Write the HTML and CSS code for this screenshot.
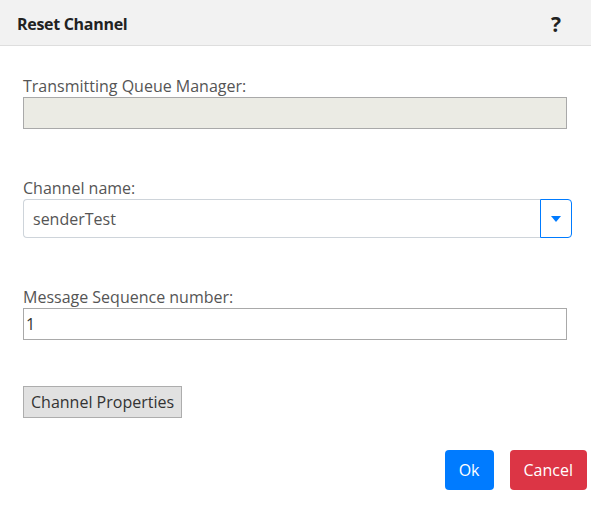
FILE: index.html
```html
<!DOCTYPE html>
<html lang="en">

<head>
    <meta charset="UTF-8">
    <meta name="viewport" content="width=device-width, initial-scale=1.0">
    <title>Reset Channel</title>
    <link rel="stylesheet" href="styles.css">
</head>

<body>
    <div class="dialog">
        <div class="header">
            <h3>Reset Channel</h3>
            <span class="help">?</span>
        </div>

        <div class="body">
            <div class="field">
                <label for="xmitq">Transmitting Queue Manager:</label>
                <input type="text" id="xmitq" class="plain" disabled>
            </div>

            <div class="field">
                <label for="channel">Channel name:</label>
                <div class="combo">
                    <input type="text" id="channel" value="senderTest">
                    <button type="button" class="drop">
                        <svg width="10" height="6" viewBox="0 0 10 6"><path d="M0 0h10L5 6z" fill="#007bff"/></svg>
                    </button>
                </div>
            </div>

            <div class="field">
                <label for="seq">Message Sequence number:</label>
                <input type="text" id="seq" class="plain" value="1">
            </div>

            <div class="props">
                <button type="button" class="legacy">Channel Properties</button>
            </div>

            <div class="actions">
                <button type="button" class="btn ok">Ok</button>
                <button type="button" class="btn cancel">Cancel</button>
            </div>
        </div>
    </div>
</body>

</html>
```

FILE: styles.css
```css
* {
    padding: 0;
    margin: 0;
    box-sizing: border-box;
    font-family: 'Open Sans', 'Noto Sans', sans-serif;
}

body {
    width: 591px;
    height: 520px;
    background: #fff;
    color: #333;
}

.header {
    display: flex;
    justify-content: space-between;
    align-items: center;
    height: 46px;
    padding: 3px 30px 0 17px;
    background: #f2f2f2;
    border-bottom: 1px solid #dedede;
}

h3 {
    font-size: 16px;
    font-weight: 700;
    letter-spacing: -0.3px;
    color: #222;
}

.help {
    font-size: 21px;
    font-weight: 700;
    color: #222;
}

.body {
    padding: 30px 19px 0 23px;
}

.field {
    display: flex;
    flex-direction: column;
    margin-bottom: 49px;
}

label {
    font-size: 16px;
    color: #555;
    line-height: 20px;
    margin-bottom: 1px;
}

input.plain {
    width: 544px;
    height: 32px;
    border: 1px solid #a9a9a9;
    padding: 0 2px;
    font-size: 16px;
    color: #333;
    outline: none;
}

input.plain:disabled {
    background: #ebebe4;
}

.combo {
    display: flex;
    width: 549px;
    height: 39px;
}

.combo input {
    flex: 1;
    border: 1px solid #ced4da;
    border-right: none;
    border-radius: 4px 0 0 4px;
    padding: 0 9px;
    font-size: 16px;
    color: #555;
    outline: none;
}

.drop {
    width: 32px;
    border: 1px solid #007bff;
    border-radius: 0 4px 4px 0;
    background: #fff;
    display: flex;
    justify-content: center;
    align-items: center;
}

.props {
    margin-top: -3px;
}

.legacy {
    height: 32px;
    padding: 0 7px;
    border: 1px solid #adadad;
    background: #e1e1e1;
    font-size: 16px;
    color: #333;
}

.actions {
    display: flex;
    justify-content: flex-end;
    gap: 16px;
    margin-top: 32px;
    margin-right: -15px;
}

.btn {
    height: 40px;
    border: none;
    border-radius: 4px;
    color: #fff;
    font-size: 16px;
    padding: 0 14px;
}

.ok {
    background: #007bff;
}

.cancel {
    background: #dc3545;
}
```
